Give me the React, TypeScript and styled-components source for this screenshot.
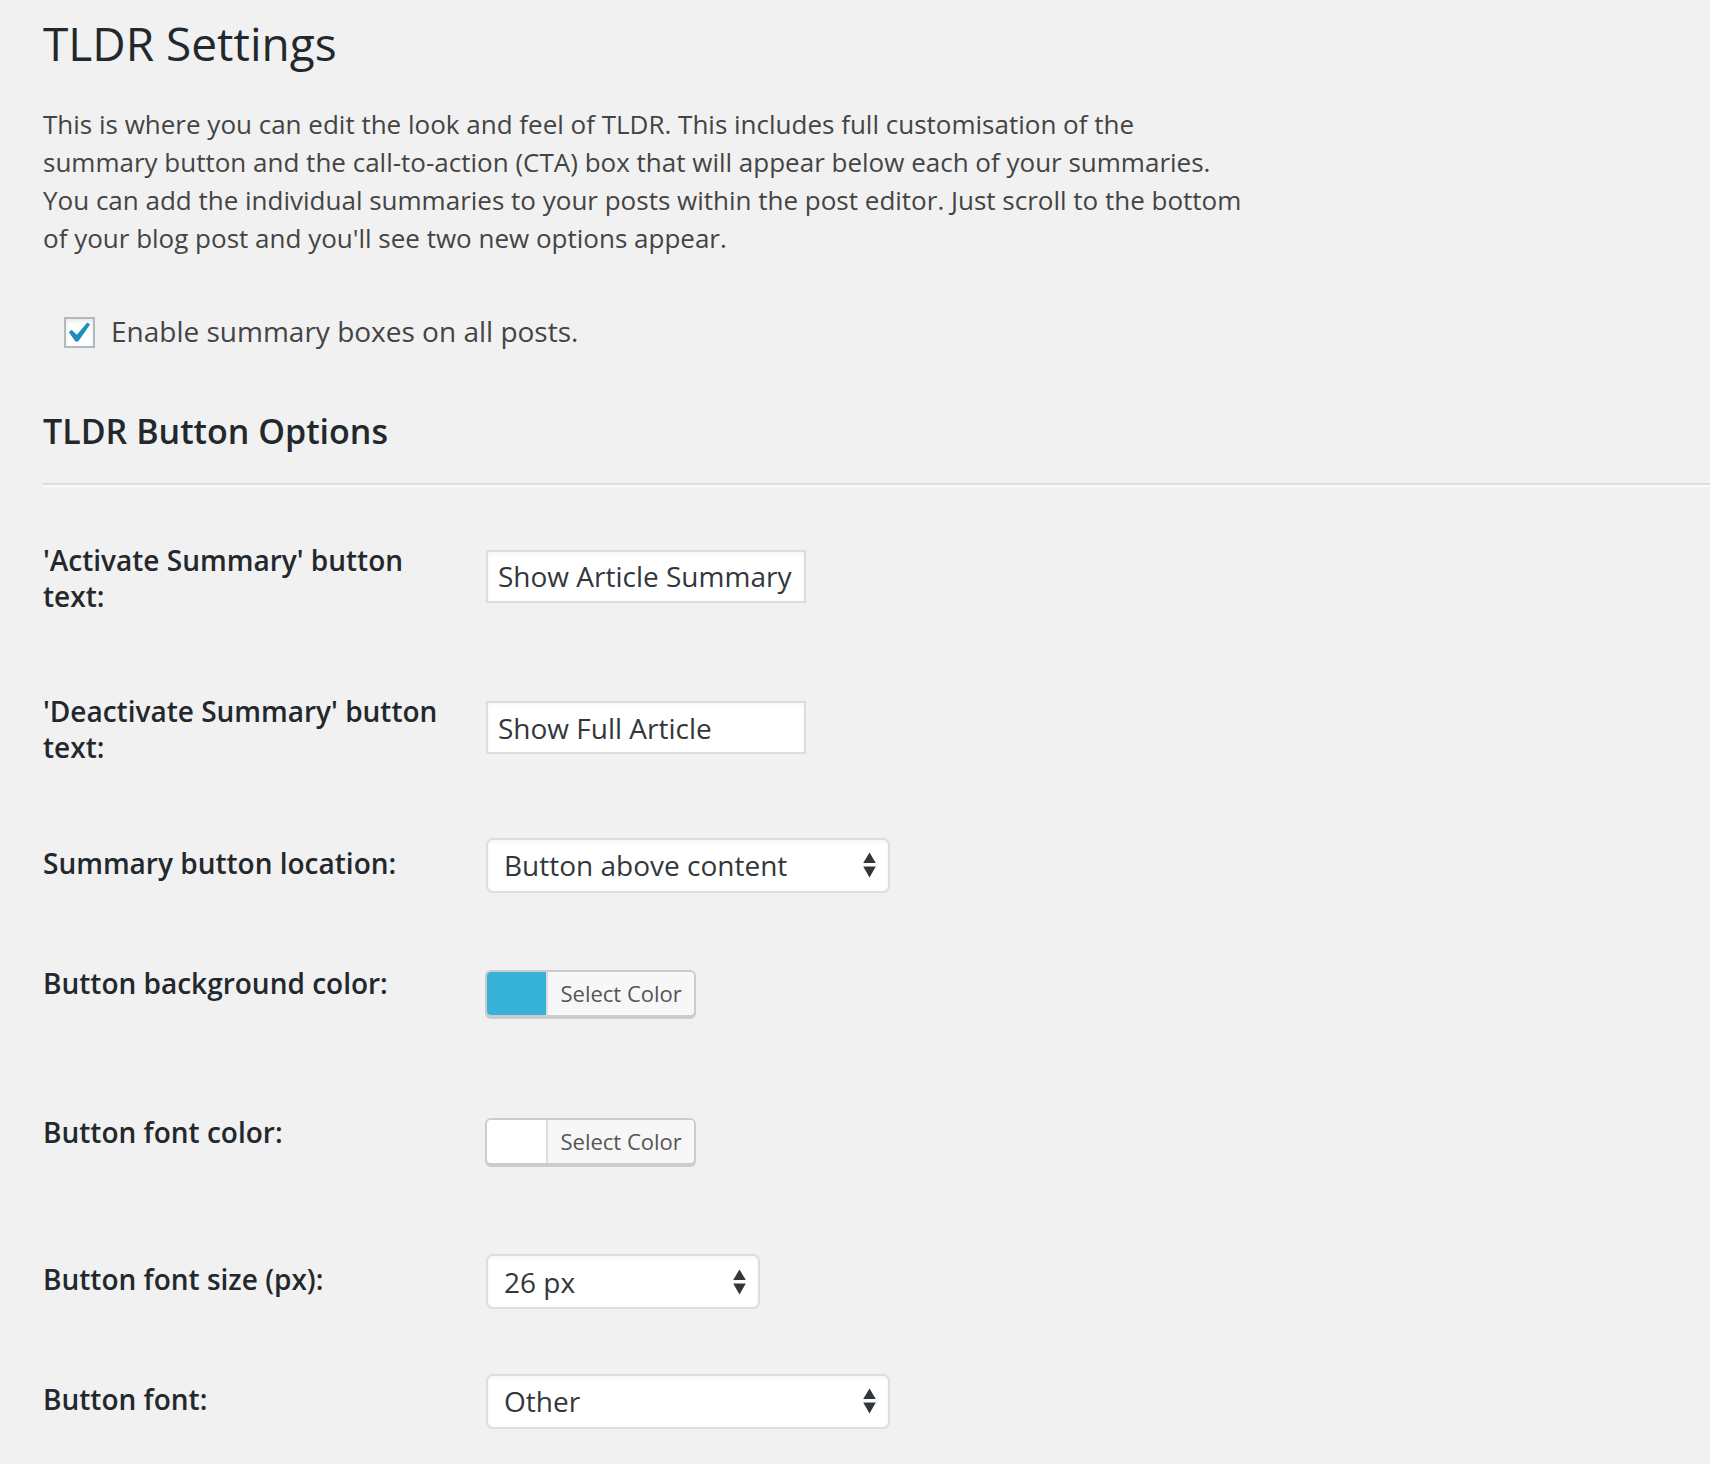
import React from "react";
import styled, { createGlobalStyle } from "styled-components";

const GlobalStyle = createGlobalStyle`
  html, body {
    margin: 0;
    padding: 0;
    background: #f1f1f1;
  }
  body {
    font-family: "Open Sans", "Noto Sans", "Liberation Sans", sans-serif;
    color: #444;
    -webkit-font-smoothing: antialiased;
  }
  * { box-sizing: border-box; }
`;

const Page = styled.div`
  padding: 13px 0 0 43px;
  min-height: 1464px;
`;

const Title = styled.h1`
  margin: 0;
  font-size: 46px;
  line-height: 60px;
  font-weight: 400;
  color: #23282d;
`;

const Intro = styled.p`
  margin: 32px 0 0;
  font-size: 26px;
  line-height: 38px;
  color: #444;
`;

const CheckRow = styled.label`
  display: flex;
  align-items: center;
  gap: 16px;
  margin: 55px 0 0 21px;
  font-size: 28px;
  line-height: 38px;
  color: #444;
`;

const CheckBox = styled.span`
  flex: none;
  display: flex;
  align-items: center;
  justify-content: center;
  width: 31px;
  height: 31px;
  margin-top: 2px;
  background: #fff;
  border: 2px solid #b4b9be;
  box-shadow: inset 0 2px 4px rgba(0, 0, 0, 0.1);
`;

const SectionTitle = styled.h2`
  margin: 59px 0 0;
  font-size: 34px;
  line-height: 44px;
  font-weight: 600;
  color: #23282d;
`;

const Divider = styled.hr`
  margin: 30px 0 0;
  height: 0;
  border: 0;
  border-top: 2px solid #ddd;
  border-bottom: 2px solid #fafafa;
`;

const FormTable = styled.div`
  margin-top: 13px;
`;

const FieldRow = styled.div`
  display: grid;
  grid-template-columns: 443px 1fr;
  align-items: start;
`;

const FieldLabel = styled.div`
  padding: 41.5px 0 38px;
  font-size: 28px;
  line-height: 36px;
  font-weight: 600;
  color: #23282d;
`;

const FieldControl = styled.div<{ $top: number; $bottom: number; $shift?: number }>`
  padding-top: ${(p) => p.$top}px;
  padding-bottom: ${(p) => p.$bottom}px;
  margin-left: ${(p) => p.$shift ?? 0}px;
  display: flex;
  align-items: flex-start;
`;

const TextInput = styled.input`
  width: 320px;
  height: 53px;
  margin: 0;
  padding: 0 10px;
  border: 2px solid #ddd;
  border-radius: 0;
  background: #fff;
  box-shadow: inset 0 2px 4px rgba(0, 0, 0, 0.04);
  font-family: "Open Sans", "Noto Sans", sans-serif;
  font-size: 28px;
  color: #32373c;
  outline: none;
`;

const SelectBox = styled.div<{ $width: number }>`
  width: ${(p) => p.$width}px;
  height: 55px;
  display: flex;
  align-items: center;
  justify-content: space-between;
  padding: 0 12px 0 16px;
  background: #fff;
  border: 2px solid #ddd;
  border-radius: 7px;
  box-shadow: inset 0 2px 4px rgba(0, 0, 0, 0.04);
  font-size: 28px;
  color: #32373c;
  cursor: default;
`;

const SelectValue = styled.span`
  line-height: 1;
`;

const ColorButton = styled.button`
  display: inline-flex;
  align-items: stretch;
  height: 47px;
  padding: 0;
  margin: 0;
  border: 2px solid #ccc;
  border-radius: 6px;
  box-shadow: 0 2px 0 #ccc;
  background: #f7f7f7;
  overflow: hidden;
  cursor: pointer;
`;

const Swatch = styled.span<{ $color: string }>`
  width: 59px;
  background: ${(p) => p.$color};
`;

const ColorLabel = styled.span`
  display: flex;
  align-items: center;
  padding: 0 12px 0 13px;
  border-left: 2px solid #ddd;
  background: #f7f7f7;
  font-family: "Open Sans", "Noto Sans", sans-serif;
  font-size: 22px;
  color: #555;
`;

const ArrowIcon = () => (
  <svg width="13" height="26" viewBox="0 0 13 26" aria-hidden="true">
    <polygon points="6.5,0.5 12.8,11 0.2,11" fill="#32373c" />
    <polygon points="0.2,14.5 12.8,14.5 6.5,25.5" fill="#32373c" />
  </svg>
);

const CheckIcon = () => (
  <svg width="23" height="20" viewBox="5.5 4.6 11 9.8" aria-hidden="true">
    <path d="M14.83 4.89l1.34.94-5.81 8.38H9.02L5.78 9.67l1.34-1.25 2.57 2.4z" fill="#1e8cbe" />
  </svg>
);

const Select = ({ value, width }: { value: string; width: number }) => (
  <SelectBox $width={width} role="listbox">
    <SelectValue>{value}</SelectValue>
    <ArrowIcon />
  </SelectBox>
);

const ColorPicker = ({ color }: { color: string }) => (
  <ColorButton type="button">
    <Swatch $color={color} />
    <ColorLabel>Select Color</ColorLabel>
  </ColorButton>
);

type Row = {
  label: React.ReactNode;
  top: number;
  bottom: number;
  shift?: number;
  control: React.ReactNode;
};

const rows: Row[] = [
  {
    label: (
      <>
        'Activate Summary' button
        <br />
        text:
      </>
    ),
    top: 49.5,
    bottom: 0,
    control: <TextInput readOnly defaultValue="Show Article Summary" />,
  },
  {
    label: (
      <>
        'Deactivate Summary' button
        <br />
        text:
      </>
    ),
    top: 49.5,
    bottom: 0,
    control: <TextInput readOnly defaultValue="Show Full Article" />,
  },
  {
    label: "Summary button location:",
    top: 34.5,
    bottom: 31,
    control: <Select value="Button above content" width={404} />,
  },
  {
    label: "Button background color:",
    top: 46,
    bottom: 55.5,
    shift: -1.5,
    control: <ColorPicker color="#36b1d8" />,
  },
  {
    label: "Button font color:",
    top: 45.5,
    bottom: 55,
    shift: -1.5,
    control: <ColorPicker color="#ffffff" />,
  },
  {
    label: "Button font size (px):",
    top: 34.5,
    bottom: 30,
    control: <Select value="26 px" width={274} />,
  },
  {
    label: "Button font:",
    top: 34.5,
    bottom: 40,
    control: <Select value="Other" width={404} />,
  },
];

export default function App() {
  return (
    <>
      <GlobalStyle />
      <Page>
        <Title>TLDR Settings</Title>
        <Intro>
          This is where you can edit the look and feel of TLDR. This includes full customisation of the
          <br />
          summary button and the call-to-action (CTA) box that will appear below each of your summaries.
          <br />
          You can add the individual summaries to your posts within the post editor. Just scroll to the bottom
          <br />
          of your blog post and you'll see two new options appear.
        </Intro>
        <CheckRow>
          <CheckBox>
            <CheckIcon />
          </CheckBox>
          Enable summary boxes on all posts.
        </CheckRow>
        <SectionTitle>TLDR Button Options</SectionTitle>
        <Divider />
        <FormTable>
          {rows.map((row, i) => (
            <FieldRow key={i}>
              <FieldLabel>{row.label}</FieldLabel>
              <FieldControl $top={row.top} $bottom={row.bottom} $shift={row.shift}>
                {row.control}
              </FieldControl>
            </FieldRow>
          ))}
        </FormTable>
      </Page>
    </>
  );
}
